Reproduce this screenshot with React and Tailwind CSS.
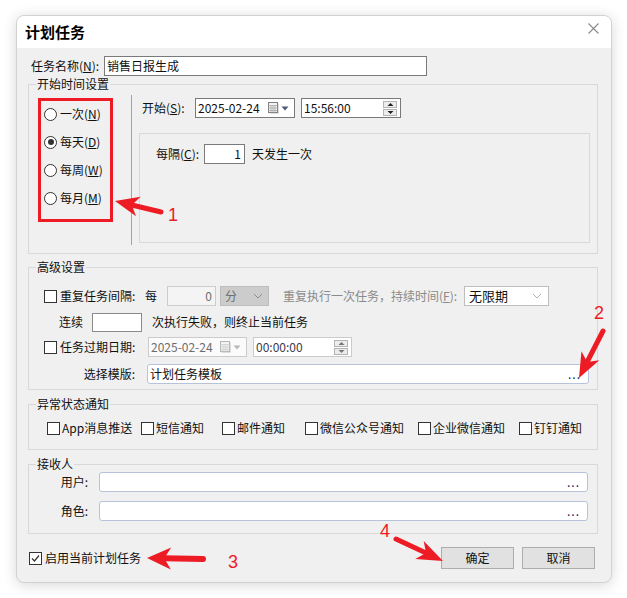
import React from "react";

const RED = "#ed1c24";

const Mn = ({ c }) => (
  <span>
    (<span className="underline underline-offset-1">{c}</span>)
  </span>
);

const Check = ({ checked }) => (
  <span className="w-[13px] h-[13px] shrink-0 border border-[#333333] bg-white flex items-center justify-center">
    {checked && (
      <svg width="11" height="11" viewBox="0 0 11 11">
        <path d="M2 5.5 L4.5 8 L9 2.5" fill="none" stroke="#333333" strokeWidth="1.2" />
      </svg>
    )}
  </span>
);

const Radio = ({ checked, label, k }) => (
  <div className="flex items-center h-[14px]">
    <span className="w-[13px] h-[13px] rounded-full border border-[#333333] bg-white flex items-center justify-center">
      {checked && <span className="w-[6px] h-[6px] rounded-full bg-[#333333]" />}
    </span>
    <span className="ml-[3px]">
      {label}
      <Mn c={k} />
    </span>
  </div>
);

const Chevron = ({ color = "#9a9a9a" }) => (
  <svg width="10" height="6" viewBox="0 0 10 6">
    <path d="M1 1 L5 5 L9 1" fill="none" stroke={color} strokeWidth="1" />
  </svg>
);

const Calendar = ({ dim }) => (
  <div className="flex items-center gap-[2px]">
    <svg width="11" height="12" viewBox="0 0 11 12">
      <rect x="1.5" y="1.5" width="9" height="10" fill="#bdbdbd" />
      <rect x="0.5" y="0.5" width="9" height="10" fill="#f4f4f4" stroke={dim ? "#b5b5b5" : "#808080"} />
      <path
        d="M0.5 3.5 H9.5 M0.5 6 H9.5 M0.5 8.5 H9.5 M3 3.5 V10.5 M5 3.5 V10.5 M7 3.5 V10.5"
        stroke={dim ? "#d0d0d0" : "#a8a8a8"}
        strokeWidth="0.8"
      />
    </svg>
    <svg width="8" height="5" viewBox="0 0 8 5">
      <path d="M0.5 0.5 H7.5 L4 4.5 Z" fill={dim ? "#b8b8b8" : "#4c5c7c"} />
    </svg>
  </div>
);

const Spin = ({ dim }) => (
  <div className="flex flex-col gap-[1px] mr-[3px]">
    {["M1.5 5 L4.5 2 L7.5 5 Z", "M1.5 2 L4.5 5 L7.5 2 Z"].map((d, i) => (
      <span
        key={i}
        className="w-[14px] h-[7px] bg-[#ececec] border border-[#b4b4b4] flex items-center justify-center"
      >
        <svg width="9" height="7" viewBox="0 0 9 7">
          <path d={d} fill={dim ? "#777777" : "#222222"} />
        </svg>
      </span>
    ))}
  </div>
);

const DateBox = ({ dim, w }) => (
  <div
    className={`h-[20px] ${w} border flex items-center justify-between pl-[2px] pr-[5px] ${
      dim ? "border-[#cbcbcb] bg-[#fbfbfb] text-[#6d6d6d]" : "border-[#7a7a7a] bg-white"
    }`}
  >
    <span>2025-02-24</span>
    <Calendar dim={dim} />
  </div>
);

const TimeBox = ({ value, dim, w }) => (
  <div
    className={`h-[20px] ${w} border bg-white flex items-center justify-between pl-[2px] ${
      dim ? "border-[#cbcbcb] text-[#3a3a4a]" : "border-[#7a7a7a]"
    }`}
  >
    <span>{value}</span>
    <Spin dim={dim} />
  </div>
);

const PickBox = ({ text, w }) => (
  <div
    className={`h-[20px] ${w} border border-[#b7c3da] rounded-[3px] bg-white flex items-center justify-between pl-[2px] pr-[7px]`}
  >
    <span>{text}</span>
    <span className="text-[#202060] tracking-[1px] leading-none">...</span>
  </div>
);

const Group = ({ title, className = "", children }) => (
  <fieldset className={`border border-[#d9d9d9] ${className}`}>
    <legend className="ml-[7px] px-[1px] h-[14px] leading-[14px]">{title}</legend>
    {children}
  </fieldset>
);

const Arrow = ({ x1, y1, x2, y2, L = 24, W = 10, S = 5 }) => {
  const dx = x2 - x1;
  const dy = y2 - y1;
  const len = Math.hypot(dx, dy);
  const ux = dx / len;
  const uy = dy / len;
  const px = -uy;
  const py = ux;
  const bx = x2 - ux * L;
  const by = y2 - uy * L;
  const nx = x2 - ux * L * 0.72;
  const ny = y2 - uy * L * 0.72;
  const pts = [
    [x2, y2],
    [bx + px * W, by + py * W],
    [nx, ny],
    [bx - px * W, by - py * W],
  ]
    .map((p) => p.join(","))
    .join(" ");
  return (
    <g>
      <line x1={x1} y1={y1} x2={nx} y2={ny} stroke={RED} strokeWidth={S} strokeLinecap="round" />
      <polygon points={pts} fill={RED} />
    </g>
  );
};

const notices = [
  ["App消息推送", "w-[94px]"],
  ["短信通知", "w-[81px]"],
  ["邮件通知", "w-[83px]"],
  ["微信公众号通知", "w-[113px]"],
  ["企业微信通知", "w-[101px]"],
  ["钉钉通知", ""],
];

export default function App() {
  return (
    <div className="relative w-[627px] h-[598px] bg-white pt-[15px] pl-[16px] text-[12px] leading-[16px] text-[#111111] font-['Noto_Sans_CJK_SC','Noto_Sans',sans-serif]">
      <div className="w-[596px] h-[568px] rounded-[8px] overflow-hidden border border-[#d2d2d2] shadow-[0_2px_14px_rgba(0,0,0,0.16)] bg-[#f0f0f0] flex flex-col">
        {/* title bar */}
        <div className="h-[32px] bg-white flex items-center justify-between pl-[8px] pr-[12px]">
          <span className="text-[15px] font-bold text-black">计划任务</span>
          <svg width="11" height="11" viewBox="0 0 11 11" className="self-start mt-[7px]">
            <path d="M0.5 0.5 L10.5 10.5 M10.5 0.5 L0.5 10.5" stroke="#8a8a8a" strokeWidth="1.1" />
          </svg>
        </div>

        {/* body */}
        <div className="flex-1 pt-[8px] pl-[11px] pr-[13px]">
          <div className="flex items-center h-[20px] pl-[3px]">
            <span className="w-[73px]">
              任务名称<Mn c="N" />:
            </span>
            <div className="w-[323px] h-[20px] border border-[#7a7a7a] bg-white flex items-center pl-[2px]">
              销售日报生成
            </div>
          </div>

          {/* start time */}
          <Group title="开始时间设置" className="mt-[1px]">
            <div className="flex h-[162px] pt-[4px] pb-[8px]">
              <div className="relative w-[103px] border-r border-[#a4a4a4]">
                <div className="pt-[12px] pl-[15px] flex flex-col gap-[14px]">
                  <Radio label="一次" k="N" />
                  <Radio label="每天" k="D" checked />
                  <Radio label="每周" k="W" />
                  <Radio label="每月" k="M" />
                </div>
                <div className="absolute left-[9px] top-[3px] w-[75px] h-[124px] border-[3px] border-[#ed1c24]" />
              </div>
              <div className="flex-1 pl-[10px] pr-[7px] pt-[3px]">
                <div className="flex items-center h-[20px]">
                  <span className="w-[53px]">
                    开始<Mn c="S" />:
                  </span>
                  <DateBox w="w-[100px]" />
                  <div className="ml-[6px]">
                    <TimeBox value="15:56:00" w="w-[100px]" />
                  </div>
                </div>
                <div className="mt-[15px] -ml-[3px] h-[110px] border border-[#d9d9d9] pt-[10px] pl-[16px]">
                  <div className="flex items-center h-[20px]">
                    <span className="w-[48px]">
                      每隔<Mn c="C" />:
                    </span>
                    <div className="w-[41px] h-[20px] border border-[#7a7a7a] bg-white flex items-center justify-end pr-[3px]">
                      1
                    </div>
                    <span className="ml-[7px]">天发生一次</span>
                  </div>
                </div>
              </div>
            </div>
          </Group>

          {/* advanced */}
          <Group title="高级设置" className="mt-[6px]">
            <div className="pt-[12px] pb-[5px]">
              <div className="flex items-center h-[20px] pl-[15px]">
                <Check />
                <span className="ml-[3px] w-[85px]">重复任务间隔:</span>
                <span className="w-[22px]">每</span>
                <div className="w-[49px] h-[20px] border border-[#cccccc] bg-[#f4f4f4] text-[#6d6d6d] flex items-center justify-end pr-[3px]">
                  0
                </div>
                <div className="ml-[4px] w-[49px] h-[20px] border border-[#bdbdbd] bg-[#cccccc] text-[#6d6d6d] flex items-center justify-between pl-[4px] pr-[5px]">
                  <span>分</span>
                  <Chevron color="#8c8c8c" />
                </div>
                <span className="ml-[14px] w-[181px] text-[#8a8a8a]">
                  重复执行一次任务，持续时间<Mn c="F" />:
                </span>
                <div className="w-[85px] h-[20px] border border-[#bdbdbd] bg-white flex items-center justify-between pl-[4px] pr-[6px]">
                  <span className="text-[13px]">无限期</span>
                  <Chevron color="#b0b0b0" />
                </div>
              </div>

              <div className="flex items-center h-[20px] pl-[30px] mt-[6px]">
                <span className="w-[33px]">连续</span>
                <div className="w-[50px] h-[19px] border border-[#8a8a8a] bg-white" />
                <span className="ml-[10px]">次执行失败，则终止当前任务</span>
              </div>

              <div className="flex items-center h-[20px] pl-[15px] mt-[5px]">
                <Check />
                <span className="ml-[3px] w-[88px]">任务过期日期:</span>
                <DateBox dim w="w-[99px]" />
                <div className="ml-[6px]">
                  <TimeBox dim value="00:00:00" w="w-[99px]" />
                </div>
              </div>

              <div className="flex items-center h-[20px] mt-[7px] pr-[8px]">
                <span className="w-[118px] text-right pr-[12px]">选择模版:</span>
                <PickBox text="计划任务模板" w="flex-1" />
              </div>
            </div>
          </Group>

          {/* notices */}
          <Group title="异常状态通知" className="mt-[7px]">
            <div className="flex items-center h-[14px] mt-[10px] mb-[14px] pl-[18px]">
              {notices.map(([t, w]) => (
                <div key={t} className={`flex items-center ${w}`}>
                  <Check />
                  <span className="ml-[2px]">{t}</span>
                </div>
              ))}
            </div>
          </Group>

          {/* receivers */}
          <Group title="接收人" className="mt-[7px]">
            <div className="pt-[1px] pb-[12px] pr-[9px] flex flex-col gap-[9px]">
              <div className="flex items-center h-[20px]">
                <span className="w-[70px] text-right pr-[11px]">用户:</span>
                <PickBox text="" w="flex-1" />
              </div>
              <div className="flex items-center h-[20px]">
                <span className="w-[70px] text-right pr-[11px]">角色:</span>
                <PickBox text="" w="flex-1" />
              </div>
            </div>
          </Group>

          {/* footer */}
          <div className="flex items-center justify-between h-[22px] mt-[13px] pl-[1px] pr-[3px]">
            <div className="flex items-center">
              <Check checked />
              <span className="ml-[3px]">启用当前计划任务</span>
            </div>
            <div className="flex gap-[8px]">
              <button className="w-[73px] h-[22px] bg-[#e1e1e1] border border-[#adadad] text-[12px]">确定</button>
              <button className="w-[73px] h-[22px] bg-[#e1e1e1] border border-[#adadad] text-[12px]">取消</button>
            </div>
          </div>
        </div>
      </div>

      {/* annotations */}
      <svg className="absolute inset-0 pointer-events-none" width="627" height="598" viewBox="0 0 627 598">
        <Arrow x1={161} y1={212} x2={115} y2={201} L={24} W={10} S={5} />
        <Arrow x1={603} y1={331} x2={579} y2={378} L={25} W={10} S={5} />
        <Arrow x1={203} y1={559} x2={147} y2={558} L={24} W={11} S={6} />
        <Arrow x1={396} y1={539} x2={443} y2={561} L={26} W={10} S={5} />
      </svg>
      <span className="absolute left-[168px] top-[205px] text-[18px] leading-[20px] text-[#ed1c24] font-['Liberation_Sans',sans-serif]">1</span>
      <span className="absolute left-[594px] top-[303px] text-[18px] leading-[20px] text-[#ed1c24] font-['Liberation_Sans',sans-serif]">2</span>
      <span className="absolute left-[228px] top-[552px] text-[18px] leading-[20px] text-[#ed1c24] font-['Liberation_Sans',sans-serif]">3</span>
      <span className="absolute left-[380px] top-[521px] text-[18px] leading-[20px] text-[#ed1c24] font-['Liberation_Sans',sans-serif]">4</span>
    </div>
  );
}
